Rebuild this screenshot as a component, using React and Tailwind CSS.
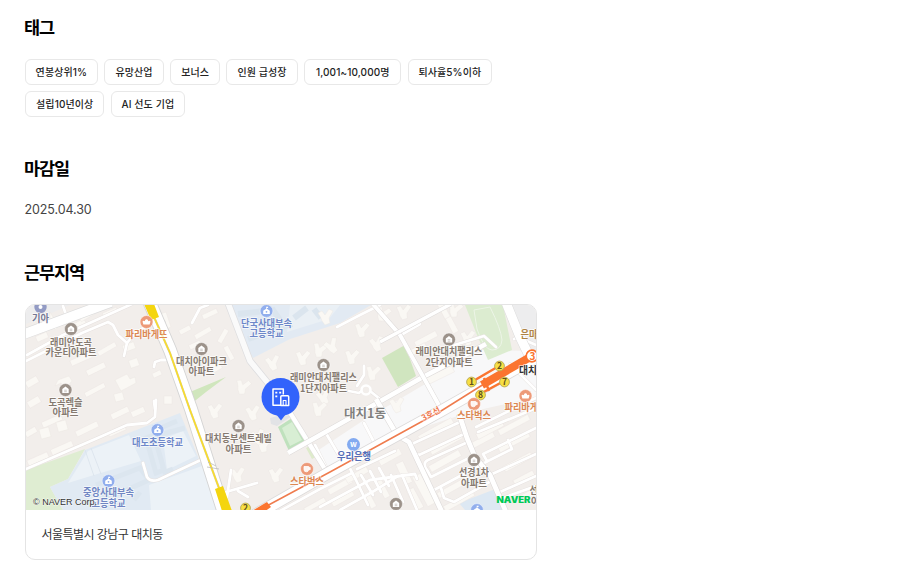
import React from "react";

const tags = [
  { text: "연봉상위1%", width: "w-[72.7px]" },
  { text: "유망산업", width: "w-[59.7px]" },
  { text: "보너스", width: "w-[49.5px]" },
  { text: "인원 급성장", width: "w-[71.3px]" },
  { text: "1,001~10,000명", width: "w-[97.2px]" },
  { text: "퇴사율5%이하", width: "w-[84px]" },
  { text: "설립10년이상", width: "w-[79.4px]" },
  { text: "AI 선도 기업", width: "w-[74px]" },
];

// Long apartment blocks: centre x, centre y, length, thickness, angle
const blocks = [
  [40, 326, 17, 5, -24], [42, 337, 12, 6, -24], [77, 325, 18, 5, -30], [88, 315, 18, 5, -30],
  [110, 312, 15, 4, -24], [81, 359, 22, 6, -24], [107, 349, 20, 5, -30], [96, 369, 20, 6, -26],
  [129, 347, 12, 7, -20], [134, 363, 9, 8, -20], [32, 382, 13, 7, -30], [34, 402, 13, 7, -30],
  [31, 432, 12, 6, -30], [52, 421, 21, 6, -24], [38, 459, 22, 6, -24], [62, 448, 23, 6, -24],
  [87, 429, 24, 6, -26], [120, 413, 19, 6, -26], [117, 431, 18, 5, -24], [138, 412, 14, 6, -24],
  [95, 390, 22, 5, -28], [119, 397, 9, 8, -15], [168, 400, 8, 8, 0], [157, 374, 9, 5, -25],
  [45, 433, 10, 10, -15], [62, 426, 10, 10, -15], [185, 330, 12, 5, -28], [203, 333, 18, 5, -30],
  [210, 314, 16, 5, -25], [195, 345, 12, 5, -25], [223, 336, 15, 5, -60], [229, 353, 15, 5, 62],
  [215, 367, 12, 9, -30], [443, 309, 21, 6, 62], [452, 325, 17, 6, 62], [426, 339, 24, 6, -28],
  [417, 350, 20, 6, -28], [440, 375, 29, 7, -26], [490, 386, 20, 5, -28],
  [436, 430, 38, 7, -29], [446, 444, 35, 6, -29], [445, 461, 34, 7, -29],
  [454, 487, 36, 6, -29], [459, 501, 33, 6, -29], [481, 441, 29, 6, -28], [490, 430, 29, 6, -28],
  [514, 425, 34, 6, -28], [514, 442, 34, 6, -28], [518, 462, 31, 6, -28], [524, 478, 22, 6, -28],
  [340, 486, 26, 6, -29], [343, 499, 24, 5, -29], [357, 475, 24, 6, -29], [390, 457, 24, 7, -29],
  [404, 473, 8, 23, -25], [424, 490, 9, 33, -28], [415, 499, 8, 22, -28], [383, 489, 6, 19, -28],
  [370, 500, 6, 17, -28], [315, 505, 23, 5, -29], [526, 496, 17, 6, -28],
];

// Tower apartments, drawn as three-armed shapes: x, y, angle
const towers = [
  [326, 317, 0], [320, 350, 20], [273, 363, -5], [303, 358, 8], [332, 346, -20], [243, 387, 20],
  [362, 330, 10], [383, 314, 25], [404, 312, 5], [377, 344, -5], [373, 373, 15], [215, 411, 5],
  [253, 413, 0], [264, 445, 10], [238, 475, 0], [276, 475, 5], [324, 397, -10], [319, 409, 15],
  [352, 357, 10], [455, 310, 20], [468, 338, 5], [397, 405, 0], [258, 437, -8],
];

const minorRoads = [
  "M63 306 L70 326", "M27 355 L63 335 L132 304", "M26 361 L82 333 L108 322 L113 325 L118 335 L127 343 L135 333 L145 327 L164 322",
  "M127 343 L124 356", "M154 367 L155 362 L161 360 L166 360", "M155 409 L154 401",
  "M26 469 L63 453 L100 437 L127 425 L147 423 L155 417 L156 400",
  "M143 463 L147 477 Q150 482 158 480 L205 458", "M208 305 L200 308 L192 323", "M231 470 L227 497 M226 492 L257 483 M238 491 L248 497",
  "M184 384 L190 408 L200 422", "M535 330 L514 339 M536 345 L520 338",
  "M337 327 L360 315 L380 305", "M401 335 L420 324", "M357 386 L364 375 L364 366",
  "M364 389 L359 393 L349 391 M370 391 L380 399", "M327 435 L340 457", "M315 445 L326 467",
  "M364 423 L375 444", "M438 350 L484 336 L496 347", "M510 364 L536 390",
  "M460 422 L414 443 Q409 446 414 453 L419 455 L466 433",
  "M468 442 L428 460 Q422 463 427 470 L431 477 L475 455",
  "M434 490 L488 461 L512 449 L508 440 M487 461 L483 454 L536 428",
  "M476 427 L536 398 M478 432 L534 409 M490 475 L536 454",
  "M441 488 L444 498 L454 502 L493 480", "M500 492 L536 476 M500 499 L536 486",
  "M320 507 L370 480 L415 474 L417 479", "M340 510 L374 491 L398 476",
  "M357 469 L395 451 M361 475 L373 495 M370 471 L381 492 M379 468 L389 486 M391 475 L403 502 M402 475 L417 510",
  "M280 511 L320 489 L352 473", "M344 457 L356 480 L368 505",
];

function Label({ x, y, w, children, color = "#857a70", size = 10.4 }) {
  return (
    <text
      x={x} y={y} fontSize={size} fontWeight="600" fill={color} stroke="#fff" strokeOpacity=".7" strokeWidth="1.6"
      strokeLinejoin="round" paintOrder="stroke" textAnchor="middle" textLength={w} lengthAdjust="spacingAndGlyphs"
    >
      {children}
    </text>
  );
}

function Home({ x, y }) {
  return (
    <g transform={`translate(${x} ${y})`}>
      <circle r="6.5" fill="#9c928a" stroke="#fff" strokeOpacity=".5" />
      <path d="M-3.2 -1 L0 -3.4 L3.2 -1 V3.1 H-3.2Z" fill="#fff" />
      <path d="M-1.3 .2h2.6M-1.3 1.7h2.6" stroke="#9c928a" strokeOpacity=".7" strokeWidth=".7" />
    </g>
  );
}

function School({ x, y }) {
  return (
    <g transform={`translate(${x} ${y})`}>
      <circle r="6.4" fill="#91aeed" stroke="#fff" strokeOpacity=".5" />
      <path d="M-3.3 -.3 L-.3 -2.2 V-4.2 H1.6 V-3 H.4 V-2.2 L3.3 -.3 V3 H-3.3Z" fill="#fff" />
      <circle cy=".8" r=".9" fill="#91aeed" />
    </g>
  );
}

function Shop({ x, y, cup }) {
  return (
    <g transform={`translate(${x} ${y})`}>
      <circle r="6.5" fill="#ed9a79" stroke="#fff" strokeOpacity=".5" />
      {cup ? (
        <path d="M-3 -2.5 H1.7 V.5 Q1.5 2.8 -.7 2.8 Q-3 2.8 -3 .5Z M1.7 -1.6 H3.2 V.7 H1.6" fill="#fff" fillOpacity=".9" stroke="#fff" strokeWidth=".8" />
      ) : (
        <path d="M-4 -.6 Q-3 -2 -1.8 -.8 Q-1.2 -3 0 -2.7 Q1.4 -3 1.8 -.8 Q3 -2 4 -.6 L3.1 2.4 H-3.1Z" fill="#fff" />
      )}
    </g>
  );
}

function Exit({ x, y, n }) {
  return (
    <g>
      <circle cx={x} cy={y} r="4.9" fill="#f7df43" stroke="#b5a95f" strokeWidth=".9" />
      <text x={x} y={y + 3} fontSize="8.5" fontWeight="600" textAnchor="middle" fill="#5d511f">{n}</text>
    </g>
  );
}

function Map() {
  return (
    <svg viewBox="26 305 510 205" className="block h-[205px] w-[510px] font-['Noto_Sans_CJK_KR',sans-serif]" role="img" aria-label="대치동 지도">
      <rect x="26" y="305" width="510" height="205" fill="#f2eeeb" />
      {/* Districts, parks and school grounds */}
      <path d="M26 305H70L26 324Z M503 305H536V370Z" fill="#ededee" />
      <path d="M314 453 L361 422 L415 390 L483 350 L536 351 V397 L470 412 L399 435 L325 474Z" fill="#f8f8f9" />
      <path d="M225 305H371L340 323L290 339L253 358Z" fill="#e2eaf3" />
      <path d="M290 305H340L329 319L287 332Z" fill="#eaf0f5" />
      <path d="M26 470L85 449L68 479L50 487L63 510H26Z" fill="#dfedd2" />
      <path d="M85 450L180 413L220 510H63L50 487L68 479Z" fill="#e1eaf3" />
      <path d="M88 451L129 435L141 461L94 475L68 483Z M163 439L183 431L196 456L167 470Z M149 485L202 466L218 510H151Z" fill="#ecf2f7" />
      <path d="M85 450L94 476M91 448L101 474" stroke="#d9e2eb" strokeWidth=".8" />
      <path d="M146 438L154 435L164 470L156 473Z M158 429L177 421M155 436L185 428M162 466L165 472L173 469M96 485L140 468L149 480L113 496L108 490M102 498L119 492M134 500L140 492" fill="none" stroke="#dce6ef" strokeWidth="5" />
      <path d="M238 314L273 310L280 320L255 324M248 339L292 324M294 318L307 308M314 309L321 318" fill="none" stroke="#dbe5ee" strokeWidth="6" />
      <path d="M190 392L226 377L206 392L191 404Z" fill="#d0e6bd" />
      <path d="M465 305H503L512 350L488 360L477 335Z" fill="#dcecd0" />
      <path d="M474 310L490 307Q501 329 502 340Q501 350 492 350Q484 350 477 329Z" fill="none" stroke="#edf5e7" strokeWidth="1" />
      <path d="M382 358L405 345L416 376L398 387Z" fill="#d0e5bf" />
      <path d="M278 427L292 418L306 441L289 451Z" fill="#bfe1bd" />
      <path d="M282 428L292 422L302 440L290 446Z" fill="#d8eed4" />
      <path d="M306 448L312 445L319 455L312 459Z" fill="#deebcb" />
      <path d="M270 418L281 415L292 416L277 426L271 424Z" fill="#e2e3e6" />
      <path d="M459 503L498 488L504 510H465Z" fill="#dde8f3" />

      {/* Buildings */}
      <g fill="#faf8f4" stroke="#eae5e1" strokeWidth=".4">
        {blocks.map(([x, y, w, h, a], i) => (
          <rect key={i} x={x - w / 2} y={y - h / 2} width={w} height={h} transform={`rotate(${a} ${x} ${y})`} />
        ))}
        {towers.map(([x, y, a], i) => (
          <path key={i} transform={`translate(${x} ${y}) rotate(${a})`} d="M-8 -4L-4 -6L-1 -2L3 -8L7 -6L3 1L4 6L-1 8L-4 4L-5 1Z" />
        ))}
        <path d="M50 312L54 319L62 323L55 330L52 325L47 329L43 324L50 320Z M58 380L69 376L72 381L65 389L61 383L55 386Z M115 380L127 374L130 379L135 377L136 383L121 391Z M158 315L166 312L171 327L162 331Z" />
      </g>

      {/* Side streets */}
      <g fill="none" strokeLinejoin="round" strokeLinecap="round">
        {minorRoads.map((d, i) => <path key={i} d={d} stroke="#e6e1df" strokeWidth="3.6" />)}
        {minorRoads.map((d, i) => <path key={i} d={d} stroke="#fff" strokeWidth="2.8" />)}
        <circle cx="366" cy="390" r="4.5" fill="#f2eeeb" stroke="#fff" strokeWidth="2.5" />
      </g>

      {/* Main streets */}
      <g fill="none" strokeLinejoin="round">
        <path d="M24 334L111 302" stroke="#dddddd" strokeWidth="11" />
        <path d="M24 334L111 302" stroke="#fff" strokeWidth="9.6" />
        <path d="M228 303L250 361L272 388" stroke="#dddddf" strokeWidth="7" />
        <path d="M228 303L250 361L272 388" stroke="#fafafa" strokeWidth="5.6" />
        <path d="M289 411L328 474" stroke="#dedbda" strokeWidth="5.5" />
        <path d="M289 411L328 474" stroke="#fff" strokeWidth="4.3" />
        <path d="M288 453L370 407L423 377L486 344" stroke="#dedbda" strokeWidth="5.8" />
        <path d="M288 453L370 407L423 377L486 344" stroke="#fff" strokeWidth="4.7" />
        <path d="M372 303L400 335L441 409" stroke="#dedbda" strokeWidth="5" />
        <path d="M372 303L400 335L441 409" stroke="#fff" strokeWidth="4" />
        <path d="M380 342L451 304" stroke="#dedbda" strokeWidth="4.4" />
        <path d="M380 342L451 304" stroke="#fff" strokeWidth="3.5" />
        <path d="M376 399L397 435L409 442L442 512M459 414L467 438L475 457L490 475L506 512" stroke="#dedbda" strokeWidth="6" />
        <path d="M376 399L397 435L409 442L442 512M459 414L467 438L475 457L490 475L506 512" stroke="#fff" strokeWidth="4.8" />
        <path d="M505 300L520 337L537 372" stroke="#dcdcdc" strokeWidth="10" />
        <path d="M505 300L520 337L537 372" stroke="#fff" strokeWidth="9" />
        <path d="M248 519L330 472L441 411L538 356" stroke="#dcdada" strokeWidth="12.5" />
        <path d="M248 519L330 472L441 411L538 356" stroke="#fff" strokeWidth="11" />
        <path d="M149 301L170 350L191 409L224 513" stroke="#d4d4d4" strokeWidth="14" />
        <path d="M149 301L170 350L191 409L224 513" stroke="#fff" strokeWidth="12.2" />
        <path d="M154 317L170 353L190 410L219 488" stroke="#d8d0ae" strokeWidth="2.2" />
        <path d="M154 317L170 353L190 410L219 488" stroke="#f8dc2c" strokeWidth="1.6" />
        <path d="M207 467L219 469M208 462L216 466" stroke="#bbb" strokeWidth=".8" />
      </g>
      <path d="M144 304H154L159 317L151 320Z M215 489L223 486L232 511H222Z" fill="#f4d50f" />

      {/* Line 3 and station exits */}
      <path d="M263 508L330 472L441 411L484 384" fill="none" stroke="#ef7c4e" strokeWidth="1.5" />
      <path d="M252 511L267 502L271 507L264 512Z" fill="#fb7530" />
      <g fill="none" stroke="#fb7530">
        <path d="M482 385L532 356" strokeWidth="8" />
        <path d="M475 380L499 366M480 394L504 381M484 378L489 391" strokeWidth="2.5" />
      </g>
      <circle cx="532" cy="356" r="5.8" fill="#fff" stroke="#fb7530" strokeWidth="1.7" />
      <text x="532.5" y="359.5" textAnchor="middle" fontSize="10" fontWeight="700" fill="#fb7530">3</text>
      <Exit x={499.5} y={366} n="2" />
      <Exit x={471.5} y={382} n="1" />
      <Exit x={504.5} y={382} n="7" />
      <Exit x={480.5} y={395} n="8" />
      <Exit x={245.5} y={508} n="2" />
      <g transform="rotate(-28 431 414)">
        <Label x={431} y={417} w={20} color="#ef7950" size={8.5}>3호선</Label>
      </g>

      {/* Places */}
      <circle cx="40.5" cy="307" r="6.2" fill="#939bc4" />
      <circle cx="40.5" cy="307" r="2" fill="#fff" />
      <Label x={40.5} y={322} w={17} color="#747793">기아</Label>
      <Home x={71} y={329} />
      <Label x={71} y={345.5} w={42}>래미안도곡</Label>
      <Label x={71} y={356} w={51}>카운티아파트</Label>
      <Shop x={146.5} y={322} />
      <Label x={146.5} y={337.5} w={42} color="#dc8752">파리바게뜨</Label>
      <Home x={201.5} y={349} />
      <Label x={201.5} y={364.5} w={51}>대치아이파크</Label>
      <Label x={201.5} y={375.3} w={26}>아파트</Label>
      <Home x={65.5} y={390} />
      <Label x={65.5} y={405.5} w={34}>도곡렉슬</Label>
      <Label x={65.5} y={416.3} w={26}>아파트</Label>
      <School x={266.5} y={311} />
      <Label x={266.5} y={326.5} w={51} color="#6d87c9">단국사대부속</Label>
      <Label x={266.5} y={337.3} w={34} color="#6d87c9">고등학교</Label>
      <Home x={323.5} y={365} />
      <Label x={323.5} y={381} w={67}>래미안대치팰리스</Label>
      <Label x={323.5} y={391.8} w={47}>1단지아파트</Label>
      <Home x={449} y={339.5} />
      <Label x={449} y={355} w={67}>래미안대치팰리스</Label>
      <Label x={449} y={365.8} w={47}>2단지아파트</Label>
      <School x={157.5} y={430} />
      <Label x={157.5} y={445.5} w={51} color="#6d87c9">대도초등학교</Label>
      <School x={108.5} y={481} />
      <Label x={108.5} y={496} w={51} color="#7086c3">중앙사대부속</Label>
      <Label x={108.5} y={507} w={34} color="#7086c3">고등학교</Label>
      <Home x={238.5} y={426} />
      <Label x={238.5} y={441.5} w={67}>대치동부센트레빌</Label>
      <Label x={238.5} y={452.5} w={26}>아파트</Label>
      <Shop x={307} y={469} cup />
      <Label x={307} y={484.5} w={34} color="#dc8752">스타벅스</Label>
      <circle cx="353.5" cy="444.5" r="6.5" fill="#83aaf0" />
      <text x="353.5" y="447.3" fontSize="8" fontWeight="700" fill="#fff" textAnchor="middle">w</text>
      <Label x={354} y={460} w={34} color="#526cb8">우리은행</Label>
      <Label x={365} y={417.5} w={42} size={12.5} color="#81807e">대치1동</Label>
      <Shop x={474} y={404} cup />
      <Label x={474} y={419.2} w={34} color="#dc8752">스타벅스</Label>
      <Shop x={525.5} y={396} />
      <Label x={525.5} y={411.2} w={42} color="#dc8752">파리바게뜨</Label>
      <Label x={529} y={337.5} w={17} color="#af8344">은마</Label>
      <Label x={528} y={374} w={18} color="#333">대치</Label>
      <Home x={474} y={460} />
      <Label x={474} y={475.5} w={30}>선경1차</Label>
      <Label x={474} y={486.5} w={26}>아파트</Label>
      <Home x={396} y={504} />
      <School x={477} y={510} />
      <Label x={538} y={494} w={17}>선경</Label>
      <Label x={544} y={505} w={26}>아파트</Label>

      {/* Attribution */}
      <g className="font-['Liberation_Sans',sans-serif]">
        <text x="33" y="505" textLength="64" lengthAdjust="spacingAndGlyphs" fontSize="9.8" fill="#333" stroke="#fff" strokeOpacity=".6" strokeWidth="1" paintOrder="stroke">© NAVER Corp.</text>
      </g>
      <text x="496.5" y="503.2" textLength="34" lengthAdjust="spacingAndGlyphs" fontSize="8.3" fontWeight="900" fill="#00c957" className="font-[Inter,sans-serif]">NAVER</text>

      {/* Workplace pin */}
      <path d="M276 414L281 420.5L286 414Z" fill="#3263fb" />
      <circle cx="280.5" cy="397" r="19" fill="#3263fb" />
      <g fill="none" stroke="#fff" strokeWidth="1.5" strokeLinejoin="round">
        <path d="M281 405.3H273V389H283.3V394.5" />
        <path d="M280.8 405.5V396.7Q280.8 395.7 281.8 395.7H287.7Q288.7 395.7 288.7 396.7V405.5Z" />
        <path d="M283.2 405.5V400.5H286V405.5" strokeWidth="1.1" />
      </g>
      <path d="M275.3 391.8h2v1.8h-2zM279.2 391.8h2v1.8h-2zM275.3 395.5h2v1.8h-2z" fill="#fff" />
    </svg>
  );
}

function Heading({ children }) {
  return (
    <h2 className="-ml-px h-7 text-[17.5px] leading-7 font-semibold tracking-[-1.1px] text-black">
      {children}
    </h2>
  );
}

export default function App() {
  return (
    <main className="h-[572px] w-[910px] overflow-hidden bg-white pt-[14px] pl-[25px] font-[Inter,'Noto_Sans_CJK_KR',sans-serif] text-[#333]">
      <section className="h-[141px]">
        <Heading>태그</Heading>
        <div className="mt-[17px] flex w-[480px] flex-wrap gap-x-[6.5px] gap-y-1.5">
          {tags.map((tag) => (
            <span key={tag.text} className={`flex h-[26px] items-center justify-center rounded-md border border-[#e8e8e8] pb-px text-[10px] leading-4 font-medium tracking-[0.1px] whitespace-nowrap text-[#222] ${tag.width}`}>
              {tag.text}
            </span>
          ))}
        </div>
      </section>
      <section className="h-[104px]">
        <Heading>마감일</Heading>
        <p className="-ml-[0.5px] mt-[17px] text-[12.5px] leading-[20px] tracking-[-0.1px] text-[#444]">2025.04.30</p>
      </section>
      <section>
        <Heading>근무지역</Heading>
        <div className="mt-[17px] h-[256px] w-[512px] overflow-hidden rounded-[10px] border border-[#e4e4e4]">
          <Map />
          <p className="pt-[14.5px] pl-[15.5px] text-[12px] leading-[20px] tracking-[-0.54px]">서울특별시 강남구 대치동</p>
        </div>
      </section>
    </main>
  );
}
